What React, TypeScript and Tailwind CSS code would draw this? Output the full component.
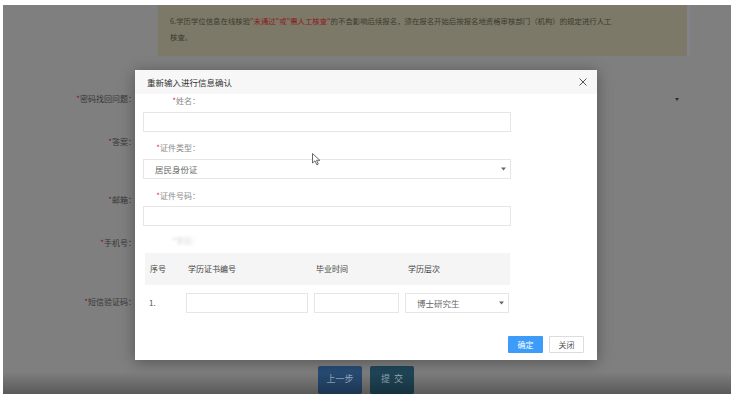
import React from 'react';

const font = "font-['Noto_Sans_CJK_SC','Liberation_Sans',sans-serif]";

interface PageRow {
  label: string;
  mt: string;
  arrow?: boolean;
}

const pageRows: PageRow[] = [
  { label: '密码找回问题：', mt: 'mt-[33px]', arrow: true },
  { label: '答案：', mt: 'mt-[23px]' },
  { label: '邮箱：', mt: 'mt-[38px]' },
  { label: '手机号：', mt: 'mt-[24px]' },
  { label: '短信验证码：', mt: 'mt-[39px]' },
];

function Caret() {
  return (
    <svg width="5" height="4" viewBox="0 0 5 4" className="shrink-0">
      <path d="M0 0.5 L5 0.5 L2.5 3.5 Z" fill="#666" />
    </svg>
  );
}

function Label({ text, className = '' }: { text: string; className?: string }) {
  return (
    <div className={`h-[14px] w-[57px] text-right text-[8px] leading-[14px] text-[#8a8a8a] whitespace-nowrap ${className}`}>
      <span className="text-[#e4393c]">*</span>
      {text}
    </div>
  );
}

export default function App() {
  return (
    <div className={`relative w-[737px] h-[394px] overflow-hidden bg-white pl-[3px] pt-[5px] ${font}`}>
      {/* page underneath the dialog, already dimmed */}
      <div className="w-[728px] h-[389px] bg-[#7f7f7f] flex flex-col">
        <div className="ml-[155px] w-[532px] h-[52px] bg-[#7c7969] border-r-[3px] border-[#86808a] pl-[12px] pt-[8px] text-[7.4px] leading-[16px] text-[#3b392d]">
          <div className="whitespace-nowrap">
            6.学历学位信息在线核验<span className="text-[#8c1a1c]">"未通过"或"需人工核查"</span>的不会影响后续报名，须在报名开始后按报名地资格审核部门（机构）的规定进行人工
          </div>
          <div className="whitespace-nowrap">核查。</div>
        </div>

        {pageRows.map((row) => (
          <div key={row.label} className={`${row.mt} flex h-[20px] w-[676px] items-center`}>
            <div className="w-[133px] text-right text-[8px] text-[#363636] whitespace-nowrap">
              <span className="text-[#7e1c1c]">*</span>
              {row.label}
            </div>
            {row.arrow && (
              <svg width="4" height="3" viewBox="0 0 4 3" className="ml-auto">
                <path d="M0 0 L4 0 L2 3 Z" fill="#2e2e2e" />
              </svg>
            )}
          </div>
        ))}

        <div className="mt-[54px] ml-[315px] flex gap-[8px]">
          <div className="w-[44px] h-[28px] rounded-[2px] bg-[#284c74] pt-[6px] text-center text-[9px] text-[#9fb1c6]">
            上一步
          </div>
          <div className="w-[44px] h-[28px] rounded-[2px] bg-[#1f4658] pt-[6px] text-center text-[9px] text-[#9fb1bb]">
            提&nbsp;&nbsp;交
          </div>
        </div>
      </div>

      {/* video controls shading */}
      <div className="absolute bottom-0 left-[3px] w-[728px] h-[22px] bg-linear-to-b from-transparent to-black/30" />

      {/* dialog */}
      <div className="absolute left-[135px] top-[70px] w-[462px] h-[290px] bg-white shadow-[0_2px_14px_rgba(0,0,0,0.35)] flex flex-col">
        <div className="h-[24px] bg-[#f7f7f7] flex items-center justify-between pl-[12px] pr-[10px]">
          <span className="text-[8.5px] text-[#333]">重新输入进行信息确认</span>
          <svg width="8" height="8" viewBox="0 0 8 8">
            <path d="M0.5 0.5 L7.5 7.5 M7.5 0.5 L0.5 7.5" stroke="#555" strokeWidth="1" />
          </svg>
        </div>

        <div className="px-[8px] flex flex-col">
          <Label text="姓名：" />
          <div className="mt-[4px] w-[368px] h-[20px] border border-[#e6e6e6]" />

          <Label text="证件类型：" className="mt-[9px]" />
          <div className="mt-[4px] w-[368px] h-[20px] border border-[#e6e6e6] flex items-center justify-between pl-[11px] pr-[4px]">
            <span className="text-[8.5px] text-[#666]">居民身份证</span>
            <Caret />
          </div>

          <Label text="证件号码：" className="mt-[10px]" />
          <div className="mt-[3px] w-[368px] h-[20px] border border-[#e6e6e6]" />

          <Label text="学历：" className="mt-[8px] blur-[1.5px] opacity-40" />

          <div className="mt-[5px] ml-[2px] w-[365px] h-[32px] bg-[#f5f5f5] flex items-center text-[8px] text-[#444]">
            <span className="ml-[5px] w-[38px]">序号</span>
            <span className="w-[128px]">学历证书编号</span>
            <span className="w-[92px]">毕业时间</span>
            <span>学历层次</span>
          </div>

          <div className="mt-[8px] flex items-center h-[20px]">
            <span className="ml-[6px] w-[37px] text-[8px] text-[#555]">1.</span>
            <div className="w-[122px] h-[20px] border border-[#e6e6e6]" />
            <div className="ml-[6px] w-[85px] h-[20px] border border-[#e6e6e6]" />
            <div className="ml-[6px] w-[104px] h-[20px] border border-[#e6e6e6] flex items-center justify-between pl-[11px] pr-[4px]">
              <span className="text-[8.5px] text-[#666]">博士研究生</span>
              <Caret />
            </div>
          </div>

          <div className="mt-[23px] mr-[5px] flex justify-end gap-[6px]">
            <div className="w-[35px] h-[17px] rounded-[1px] bg-[#3d9bfa] text-center text-[8px] leading-[17px] text-white">
              确定
            </div>
            <div className="w-[35px] h-[17px] rounded-[1px] border border-[#dcdcdc] text-center text-[8px] leading-[15px] text-[#555]">
              关闭
            </div>
          </div>
        </div>
      </div>

      {/* mouse pointer */}
      <svg width="9" height="13" viewBox="0 0 9 13" className="absolute left-[312px] top-[153px]">
        <path d="M0.5 0.5 L0.5 10 L3 7.8 L4.8 11.8 L6.3 11.1 L4.6 7.3 L7.8 7.3 Z" fill="white" stroke="#444" strokeWidth="0.8" />
      </svg>
    </div>
  );
}
